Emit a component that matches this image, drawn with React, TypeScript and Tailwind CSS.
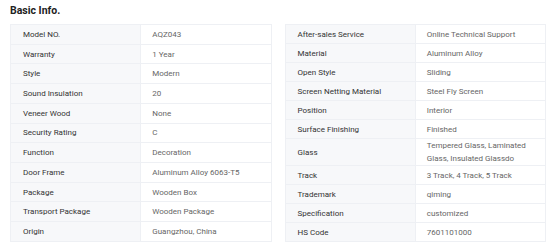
const left: [string, string][] = [
  ['Model NO.', 'AQZ043'],
  ['Warranty', '1 Year'],
  ['Style', 'Modern'],
  ['Sound Insulation', '20'],
  ['Veneer Wood', 'None'],
  ['Security Rating', 'C'],
  ['Function', 'Decoration'],
  ['Door Frame', 'Aluminum Alloy 6063-T5'],
  ['Package', 'Wooden Box'],
  ['Transport Package', 'Wooden Package'],
  ['Origin', 'Guangzhou, China'],
]

const right: [string, string][] = [
  ['After-sales Service', 'Online Technical Support'],
  ['Material', 'Aluminum Alloy'],
  ['Open Style', 'Sliding'],
  ['Screen Netting Material', 'Steel Fly Screen'],
  ['Position', 'Interior'],
  ['Surface Finishing', 'Finished'],
  ['Glass', 'Tempered Glass, Laminated Glass, Insulated Glassdo'],
  ['Track', '3 Track, 4 Track, 5 Track'],
  ['Trademark', 'qiming'],
  ['Specification', 'customized'],
  ['HS Code', '7601101000'],
]

function InfoTable({ rows }: { rows: [string, string][] }) {
  return (
    <table className="w-full table-fixed border-collapse border border-[#eef0f4]">
      <tbody>
        {rows.map(([k, v]) => (
          <tr key={k} className="h-[19px]">
            <td className="w-1/2 border border-[#eef0f4] bg-[#f7f8fa] pl-[12px] pr-2 py-0 leading-[13px] text-[#333]">
              {k}
            </td>
            <td className="w-1/2 border border-[#eef0f4] bg-white pl-[11px] pr-2 py-0 leading-[13px] text-[#666]">
              {v}
            </td>
          </tr>
        ))}
      </tbody>
    </table>
  )
}

export default function App() {
  return (
    <div className="w-[554px] h-[251px] bg-white px-[10px] pt-[4px] font-['Roboto',sans-serif] text-[8px]">
      {/* Heading */}
      <h3 className="text-[10.5px] font-bold leading-[14px] text-[#222] mb-[6px]">Basic Info.</h3>

      {/* Two column spec tables */}
      <div className="grid grid-cols-2 gap-[13px] w-[536px]">
        <InfoTable rows={left} />
        <InfoTable rows={right} />
      </div>
    </div>
  )
}
